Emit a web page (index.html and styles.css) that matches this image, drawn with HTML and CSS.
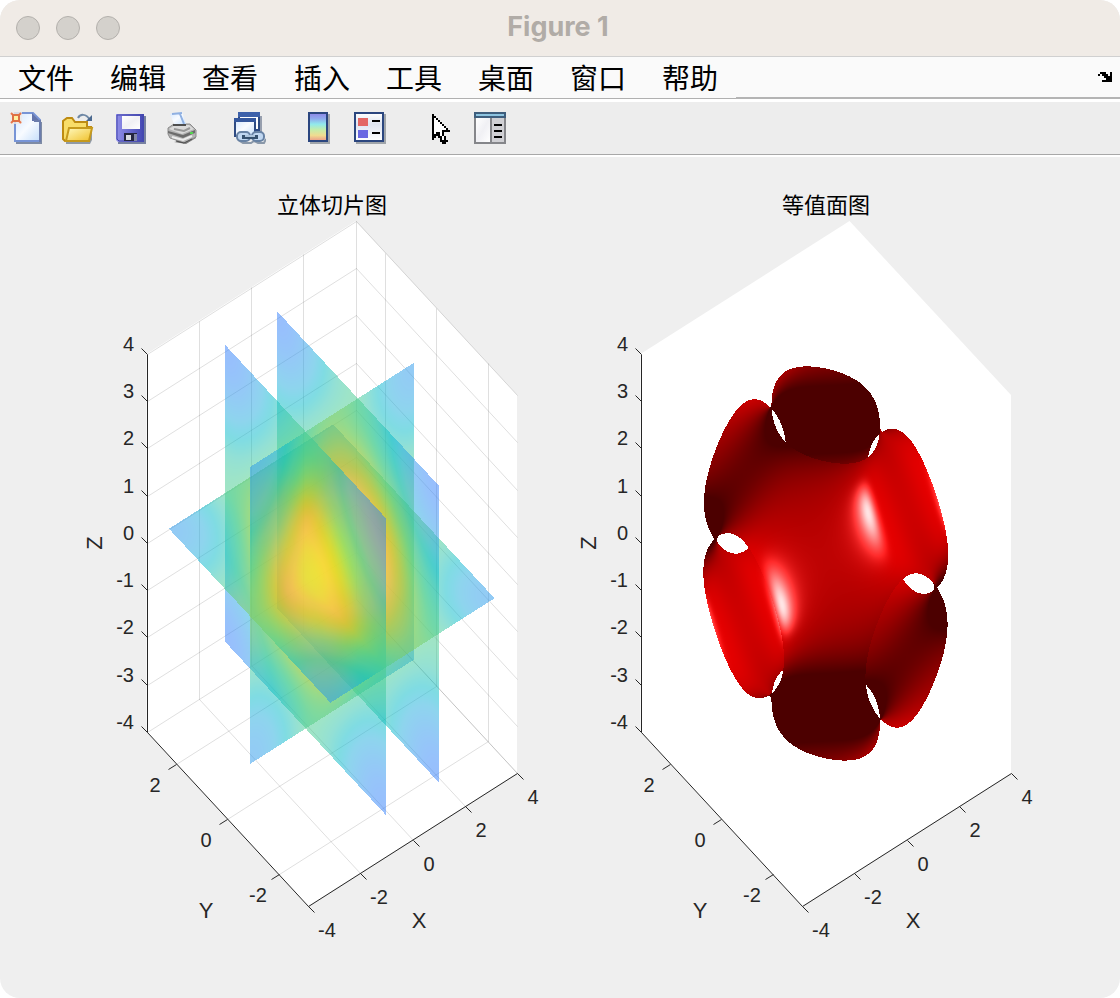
FILE: index.html
```html
<!DOCTYPE html>
<html lang="zh-CN">
<head>
    <meta charset="UTF-8">
    <meta name="viewport" content="width=device-width, initial-scale=1.0">
    <title>Figure 1</title>
    <link rel="stylesheet" href="styles.css">
</head>
<body>
    <div class="window">
        <header class="titlebar">
            <div class="lights">
                <span class="light"></span>
                <span class="light"></span>
                <span class="light"></span>
            </div>
            <h1 class="title">Figure 1</h1>
        </header>

        <nav class="menubar">
            <div class="menus">
                <button>文件</button>
                <button>编辑</button>
                <button>查看</button>
                <button>插入</button>
                <button>工具</button>
                <button>桌面</button>
                <button>窗口</button>
                <button>帮助</button>
            </div>
            <div class="dock">
                <button aria-label="停靠">
                    <svg width="14" height="10" viewBox="0 0 14 10" shape-rendering="crispEdges">
                        <path d="M2 0h6v2h2v2h2V0h2v10H4V8h4V6H6V4H4V2H2v2H0V2h2z"/>
                    </svg>
                </button>
            </div>
        </nav>

        <div class="toolbar">
            <div class="group">
                <button aria-label="新建">
                    <svg viewBox="0 0 32 32">
                        <path d="M6 32h26V10h-2v20H6z" fill="#7e8ba5"/>
                        <path d="M5 1h18l7 7v21H5z" fill="url(#paper)" stroke="#7794d6" stroke-width="2"/>
                        <path d="M22 1v8h8z" fill="#6475ac"/>
                        <path d="M24 9h6v21" fill="none" stroke="#6c7dac" stroke-width="2"/>
                        <path d="M0 0h12v12H0z" fill="#efe9e4" opacity=".8"/>
                        <path d="M1 1l2 2M11 1l-2 2M1 11l2-2M11 11l-2-2" stroke="#e87750" stroke-width="2"/>
                        <rect x="3" y="3" width="6" height="6" fill="#fff0a0" stroke="#df7044" stroke-width="2"/>
                    </svg>
                </button>
                <button aria-label="打开">
                    <svg viewBox="0 0 32 32">
                        <path d="M4 32h24l2-4V14h-2v14H4z" fill="#909aa6"/>
                        <path d="M1 27V9l4-3h5l3 4h12v5h4L27 29H3z" fill="#f8dd69" stroke="#bd8b12" stroke-width="2"/>
                        <path d="M7 16h23l-3 13H4z" fill="url(#gold)" stroke="#c69a1c" stroke-width="2"/>
                        <path d="M16 6c2-4 8-5 12 2" fill="none" stroke="#6f88a5" stroke-width="2"/>
                        <path d="M24 9h6V3z" fill="#4c6a90"/>
                    </svg>
                </button>
                <button aria-label="保存">
                    <svg viewBox="0 0 32 32">
                        <path d="M4 4h28v28H4z" fill="#7781a0"/>
                        <path d="M2 2h28v28H4l-2-2z" fill="url(#disk)"/>
                        <path d="M3 3h26v26H5l-2-2z" fill="none" stroke="#4548ac" stroke-width="1"/>
                        <path d="M8 4h18v13H8z" fill="url(#label)"/>
                        <path d="M10 21h13v8H10z" fill="#24263f"/>
                        <path d="M12 23h5v5h-5z" fill="#d9dbe2"/>
                        <path d="M20 22h3v7h-3z" fill="#8287a8"/>
                    </svg>
                </button>
                <button aria-label="打印">
                    <svg viewBox="0 0 32 32">
                        <path d="M8 30l12 2 10-6v-6l-12 8z" fill="#7c7c7c"/>
                        <path d="M2 16l6-4h16l6 6v7l-12 6-14-5-2-4z" fill="#b4b4b4" stroke="#8c8c8c" stroke-width="1"/>
                        <path d="M3 17l6-4h14l5 4-12 5z" fill="#dadada"/>
                        <path d="M4 2l12-2 4 12H8z" fill="url(#paper)"/>
                        <path d="M6 2l10-1M14 2l4 10" fill="none" stroke="#8fb0e2" stroke-width="2"/>
                        <path d="M7 13h13" stroke="#4e4e4e" stroke-width="2"/>
                        <path d="M8 17l10 2 6-3" fill="none" stroke="#979797" stroke-width="2"/>
                        <path d="M2 19l15 4 12-5v3l-12 5-15-5z" fill="#6c6c6c"/>
                        <path d="M6 25l11 3 9-4" fill="none" stroke="#ececec" stroke-width="2"/>
                        <path d="M10 29l8 2 8-4" fill="none" stroke="#4c4c4c" stroke-width="1"/>
                        <path d="M24 20h3v2h-3z" fill="#55d551"/>
                    </svg>
                </button>
            </div>

            <div class="group">
                <button aria-label="链接绘图">
                    <svg viewBox="0 0 32 32">
                        <path d="M8 4h20v20H8z" fill="#979fae"/>
                        <path d="M5 1h20v17H5z" fill="#fff" stroke="#2e4b83" stroke-width="2"/>
                        <path d="M4 0h22v5H4z" fill="#3d61aa"/>
                        <path d="M1 7h20v17H1z" fill="url(#paper)" stroke="#2e4b83" stroke-width="2"/>
                        <path d="M0 6h22v4H0z" fill="#34579d"/>
                        <path d="M4 28l5 3h8l3-2 4 2h6l2-4" fill="none" stroke="#8a98a9" stroke-width="2"/>
                        <rect x="3" y="20" width="13" height="9" rx="4" fill="#c0d7f1" stroke="#6782a4" stroke-width="2"/>
                        <rect x="18" y="20" width="12" height="9" rx="4" fill="#c0d7f1" stroke="#6782a4" stroke-width="2"/>
                        <path d="M8 25h16" stroke="#36516f" stroke-width="4"/>
                        <path d="M11 24h10" stroke="#adc4dc" stroke-width="2"/>
                    </svg>
                </button>
            </div>

            <div class="group">
                <button aria-label="插入颜色栏">
                    <svg viewBox="0 0 32 32" shape-rendering="crispEdges">
                        <path d="M8 2h20v30H8z" fill="#a0a5aa"/>
                        <path d="M7 1h18v28H7z" fill="url(#bar)" stroke="#2b467f" stroke-width="2"/>
                    </svg>
                </button>
                <button aria-label="插入图例">
                    <svg viewBox="0 0 32 32" shape-rendering="crispEdges">
                        <path d="M2 2h30v30H2z" fill="#a0a5aa"/>
                        <path d="M1 1h28v28H1z" fill="url(#card)" stroke="#2b467f" stroke-width="2"/>
                        <path d="M4 6h10v8H4z" fill="#e36664"/>
                        <path d="M4 18h10v8H4z" fill="#6967e2"/>
                        <path d="M18 8h8v2h-8zM18 20h8v2h-8z"/>
                    </svg>
                </button>
            </div>

            <div class="group">
                <button aria-label="编辑绘图">
                    <svg viewBox="0 0 32 32" shape-rendering="crispEdges">
                        <path d="M10 2h2v2h2v2h2v2h2v2h2v2h2v2h2v2h2v2h2v2h-6v4h2v4h2v2h-2v2h-4v-2h-2v-4h-2v-2h-2v2h-2v2h-2z"/>
                        <path d="M12 6h2v2h2v2h2v2h2v2h2v2h2v2h-4v6h2v4h-2v-4h-2v-4h-4v2h-2z" fill="#fff"/>
                    </svg>
                </button>
                <button aria-label="属性检查器">
                    <svg viewBox="0 0 32 32" shape-rendering="crispEdges">
                        <path d="M0 0h32v32H0z" fill="#85868a"/>
                        <path d="M2 6h14v24H2z" fill="url(#label)"/>
                        <path d="M18 6h12v24H18z" fill="#d0d0d4"/>
                        <path d="M0 0h32v6H0z" fill="#3e5e7d"/>
                        <path d="M2 2h28v2H2z" fill="#8dc4e0"/>
                        <path d="M20 12h8v2h-8zM20 18h8v2h-8zM20 24h8v2h-8z"/>
                    </svg>
                </button>
            </div>
        </div>

        <main class="figure">
            <div class="axes">
                <svg class="frame" id="sliceFrame" viewBox="0 0 494 770"></svg>
                <canvas class="surface" id="slicePlot" width="494" height="770"></canvas>
            </div>
            <div class="axes">
                <svg class="frame" id="isoFrame" viewBox="0 0 494 770"></svg>
                <canvas class="surface" id="isoPlot" width="494" height="770"></canvas>
            </div>
        </main>
    </div>

    <!-- shared gradients for the toolbar icons -->
    <svg class="defs" aria-hidden="true">
        <defs>
            <linearGradient id="paper" x1="0" y1="0" x2="1" y2="1">
                <stop offset="0" stop-color="#d3e6ff"/>
                <stop offset=".5" stop-color="#f8fbff"/>
                <stop offset="1" stop-color="#c5defb"/>
            </linearGradient>
            <linearGradient id="gold" x1="0" y1="0" x2="1" y2="1">
                <stop offset="0" stop-color="#fffac0"/>
                <stop offset="1" stop-color="#f0c029"/>
            </linearGradient>
            <linearGradient id="disk" x1="0" y1="0" x2="1" y2="0">
                <stop offset="0" stop-color="#918fea"/>
                <stop offset="1" stop-color="#4145b2"/>
            </linearGradient>
            <linearGradient id="label" x1="1" y1="1" x2="0" y2="0">
                <stop offset="0" stop-color="#fff"/>
                <stop offset=".5" stop-color="#f0f0f4"/>
                <stop offset="1" stop-color="#fff"/>
            </linearGradient>
            <linearGradient id="card" x1="0" y1="0" x2="0" y2="1">
                <stop offset="0" stop-color="#fff"/>
                <stop offset=".4" stop-color="#dfe5f1"/>
                <stop offset="1" stop-color="#fff"/>
            </linearGradient>
            <linearGradient id="bar" x1="0" y1="0" x2="0" y2="1">
                <stop offset="0" stop-color="#8e84e5"/>
                <stop offset=".2" stop-color="#8fa9ed"/>
                <stop offset=".4" stop-color="#91e9ec"/>
                <stop offset=".6" stop-color="#c5edaa"/>
                <stop offset=".8" stop-color="#f0dc90"/>
                <stop offset="1" stop-color="#ec9788"/>
            </linearGradient>
        </defs>
    </svg>

    <script src="script.js"></script>
</body>
</html>
```
FILE: styles.css
```css
body {
    margin: 0;
    background-color: #fff;
    font-family: "Liberation Sans", "Noto Sans CJK SC", sans-serif;
}

.window {
    display: flex;
    flex-direction: column;
    min-height: 100vh;
    border-radius: 20px;
    overflow: hidden;
    background-color: #efefef;
}

button {
    margin: 0;
    padding: 0;
    border: none;
    background: none;
    color: #000;
    font: inherit;
}

/* title bar */
.titlebar {
    display: grid;
    grid-template-columns: 1fr auto 1fr;
    align-items: center;
    height: 56px;
    box-sizing: border-box;
    padding: 0 16px;
    background-color: #f0ebe6;
}

.lights {
    display: flex;
    gap: 16px;
}

.light {
    width: 24px;
    height: 24px;
    box-sizing: border-box;
    border: 1px solid #b3b0ac;
    border-radius: 50%;
    background-color: #d4d1cc;
}

.title {
    margin: 0;
    padding: 0 4px 2px 0;
    font: bold 27px/32px Inter, sans-serif;
    color: #b1aca7;
}

/* menus */
.menubar {
    display: flex;
    height: 42px;
    background-color: #fafafa;
    border-top: 1px solid #d0d0d0;
}

.menus {
    display: flex;
    align-items: flex-start;
    gap: 36px;
    padding: 0 18px;
    border-bottom: 1px solid #b0b0b0;
    font: 28px/40px "Noto Sans CJK SC", sans-serif;
}

.dock {
    display: flex;
    flex: 1;
    align-items: center;
    justify-content: flex-end;
    padding-right: 8px;
    border-bottom: 2px solid #b4b4b4;
}

.dock svg {
    display: block;
}

/* toolbar */
.toolbar {
    display: flex;
    gap: 36px;
    padding: 10px;
    background-color: #ededed;
    border-top: 3px solid #fff;
    border-bottom: 1px solid #a8a8a8;
    box-shadow: 0 2px #fff;
}

.group {
    display: flex;
    gap: 20px;
}

.group svg {
    display: block;
    width: 32px;
    height: 32px;
}

/* plots */
.figure {
    display: flex;
    flex: 1;
    justify-content: center;
    padding: 25px 0;
}

.axes {
    display: grid;
    width: 494px;
}

.frame,
.surface {
    grid-area: 1 / 1;
    width: 100%;
    height: auto;
}

.wall {
    fill: #fff;
}

.grid-line {
    stroke: #262626;
    stroke-opacity: 0.15;
}

.axis-line {
    fill: none;
    stroke: #262626;
}

.tick-label,
.axis-label {
    fill: #262626;
    font-size: 20px;
    text-anchor: middle;
}

.axis-label {
    font-size: 22px;
}

.tick-label.end {
    text-anchor: end;
}

.plot-title {
    fill: #000;
    font: 22px "Noto Sans CJK SC", sans-serif;
    text-anchor: middle;
}

.defs {
    display: block;
    width: 0;
    height: 0;
}
```
FILE: script.js
```javascript
const PI = Math.PI;
const WIDTH = 494;
const HEIGHT = 770;

// screen size of one data unit along each axis
const AX = [26.125, -16.625];
const AY = [-25.7, -27.7];
const AZ = -47.25;
const ORIGIN = [242, 726];

// direction from the viewer into the box, in data units
const RAY = [1, 1.0165, -0.9478];

function project(x, y, z) {
    return [
        ORIGIN[0] + AX[0] * (x + 4) + AY[0] * (y + PI),
        ORIGIN[1] + AX[1] * (x + 4) + AY[1] * (y + PI) + AZ * (z + 4)
    ];
}

const CENTER = project(0, 0, 0);

function field(x, y, z) {
    return Math.cos(x) + Math.cos(y) + Math.cos(z);
}

// ---------- axes, grid and labels ----------

function line(cls, a, b) {
    const snap = c => Math.round(c) + 0.5;
    return `<path class="${cls}" d="M${a.map(snap)}L${b.map(snap)}"/>`;
}

function text(cls, x, y, value, extra = '') {
    return `<text class="${cls}" x="${x}" y="${y}" ${extra}>${value}</text>`;
}

function drawFrame(id, title, withGrid) {
    const wall = [
        project(-4, PI, -4), project(-4, PI, 4), project(4, PI, 4),
        project(4, -PI, 4), project(4, -PI, -4), project(-4, -PI, -4)
    ];
    let out = `<polygon class="wall" points="${wall.join(' ')}"/>`;

    if (withGrid) {
        for (let x = -2; x <= 4; x += 2) {
            out += line('grid-line', project(x, PI, -4), project(x, PI, 4));
            out += line('grid-line', project(x, -PI, -4), project(x, PI, -4));
        }
        for (let y = -2; y <= 2; y += 2) {
            out += line('grid-line', project(4, y, -4), project(4, y, 4));
            out += line('grid-line', project(-4, y, -4), project(4, y, -4));
        }
        for (let z = -4; z <= 4; z++) {
            out += line('grid-line', project(-4, PI, z), project(4, PI, z));
            out += line('grid-line', project(4, PI, z), project(4, -PI, z));
        }
    }

    out += line('axis-line', project(-4, PI, 4), project(-4, PI, -4));
    out += line('axis-line', project(-4, PI, -4), project(-4, -PI, -4));
    out += line('axis-line', project(-4, -PI, -4), project(4, -PI, -4));

    for (let z = -4; z <= 4; z++) {
        const p = project(-4, PI, z);
        out += line('axis-line', p, [p[0] - 6, p[1] - 6]);
        out += text('tick-label end', 68, Math.round(p[1]) - 3, z);
    }
    for (let x = -4; x <= 4; x += 2) {
        const p = project(x, -PI, -4).map(Math.round);
        out += line('axis-line', p, [p[0] + 6, p[1] + 6]);
        out += text('tick-label', p[0] + (x < 0 ? 19 : 16), p[1] + 31, x);
    }
    for (let y = -2; y <= 2; y += 2) {
        const p = project(-4, y, -4).map(Math.round);
        out += line('axis-line', p, [p[0] - 8, p[1] + 5]);
        out += text('tick-label', p[0] - 21, p[1] + 28, y);
    }

    out += text('axis-label', 353, 748, 'X');
    out += text('axis-label', 140, 738, 'Y');
    out += text('axis-label', 0, 0, 'Z', 'transform="translate(36 363) rotate(-90)"');
    out += text('plot-title', 266, 33, title);
    document.getElementById(id).innerHTML = out;
}

// ---------- slices ----------

const PARULA = [
    [62, 38, 168], [65, 46, 187], [68, 55, 205], [70, 66, 222],
    [71, 77, 235], [71, 88, 245], [70, 98, 250], [62, 111, 254],
    [50, 124, 252], [46, 135, 247], [43, 145, 240], [38, 154, 233],
    [34, 163, 227], [29, 171, 220], [11, 179, 211], [1, 185, 199],
    [18, 190, 185], [40, 194, 171], [52, 199, 156], [67, 203, 138],
    [92, 204, 118], [118, 205, 97], [148, 202, 74], [176, 198, 55],
    [200, 193, 41], [222, 189, 42], [241, 186, 55], [254, 190, 60],
    [253, 202, 51], [249, 214, 45], [245, 227, 39], [246, 239, 32],
    [249, 251, 21]
];

function colormap(value) {
    const t = (value + 3) / 6 * (PARULA.length - 1);
    const i = Math.min(Math.floor(t), PARULA.length - 2);
    return PARULA[i].map((c, k) => c + (PARULA[i + 1][k] - c) * (t - i));
}

// normal axis and offset of each cutting plane
const PLANES = [[0, -1], [0, 1], [1, 0], [2, 0]];

// a point on the ray of one pixel: here x = 0
function rayStart(px, py) {
    const dx = px - CENTER[0];
    const dy = py - CENTER[1];
    const y = dx / AY[0];
    return [0, y, (dy - AY[1] * y) / AZ];
}

function drawSlices() {
    const ctx = document.getElementById('slicePlot').getContext('2d');
    const image = ctx.createImageData(WIDTH, HEIGHT);

    for (let py = 0; py < HEIGHT; py++) {
        for (let px = 0; px < WIDTH; px++) {
            const start = rayStart(px + 0.5, py + 0.5);
            const hits = [];
            for (const [axis, offset] of PLANES) {
                const t = (offset - start[axis]) / RAY[axis];
                const p = start.map((c, k) => c + RAY[k] * t);
                if (p.every(c => Math.abs(c) <= PI)) {
                    hits.push({ t, color: colormap(field(...p)) });
                }
            }
            if (!hits.length) continue;

            // blend from the farthest plane to the nearest
            hits.sort((a, b) => b.t - a.t);
            let sum = [0, 0, 0];
            let alpha = 0;
            for (const hit of hits) {
                sum = sum.map((c, k) => c * 0.5 + hit.color[k] * 0.5);
                alpha = alpha * 0.5 + 0.5;
            }
            const i = (py * WIDTH + px) * 4;
            for (let k = 0; k < 3; k++) image.data[i + k] = sum[k] / alpha;
            image.data[i + 3] = alpha * 255;
        }
    }
    ctx.putImageData(image, 0, 0);
}

// ---------- isosurface ----------

function normalize(v) {
    const len = Math.hypot(...v);
    return v.map(c => c / len);
}

function dot(a, b) {
    return a[0] * b[0] + a[1] * b[1] + a[2] * b[2];
}

const VIEW = normalize([-0.527, -0.687, 0.5]);
const LIGHT = normalize([0.1, -0.58, 0.81]);

function shade(p) {
    // the y axis is shorter in data units, so its normals shrink
    let n = normalize([Math.sin(p[0]), Math.sin(p[1]) * PI / 4, Math.sin(p[2])]);
    if (dot(n, VIEW) < 0) n = n.map(c => -c);
    const d = dot(n, LIGHT);
    const diffuse = Math.max(0, d);
    const reflected = n.map((c, k) => 2 * d * c - LIGHT[k]);
    const specular = d > 0 ? 0.9 * Math.pow(Math.max(0, dot(reflected, VIEW)), 10) : 0;
    return [0.3 + 0.6 * diffuse + specular, specular, specular].map(c => Math.min(255, c * 255));
}

function drawIsosurface() {
    const ctx = document.getElementById('isoPlot').getContext('2d');
    const image = ctx.createImageData(WIDTH, HEIGHT);
    const steps = 90;

    for (let py = 0; py < HEIGHT; py++) {
        for (let px = 0; px < WIDTH; px++) {
            const s = rayStart(px + 0.5, py + 0.5);

            // part of the ray inside the data box
            let near = -Infinity;
            let far = Infinity;
            for (let k = 0; k < 3; k++) {
                const a = (-PI - s[k]) / RAY[k];
                const b = (PI - s[k]) / RAY[k];
                near = Math.max(near, Math.min(a, b));
                far = Math.min(far, Math.max(a, b));
            }
            if (near >= far) continue;

            const at = t => field(s[0] + RAY[0] * t, s[1] + RAY[1] * t, s[2] + RAY[2] * t);
            const step = (far - near) / steps;
            let prev = at(near);
            for (let j = 1; j <= steps; j++) {
                const value = at(near + j * step);
                if (prev * value < 0) {
                    let lo = near + (j - 1) * step;
                    let hi = lo + step;
                    for (let n = 0; n < 10; n++) {
                        const mid = (lo + hi) / 2;
                        if (at(mid) * prev > 0) lo = mid;
                        else hi = mid;
                    }
                    const color = shade(s.map((c, k) => c + RAY[k] * lo));
                    const i = (py * WIDTH + px) * 4;
                    for (let k = 0; k < 3; k++) image.data[i + k] = color[k];
                    image.data[i + 3] = 255;
                    break;
                }
                prev = value;
            }
        }
    }
    ctx.putImageData(image, 0, 0);
}

drawFrame('sliceFrame', '立体切片图', true);
drawFrame('isoFrame', '等值面图', false);
drawSlices();
drawIsosurface();
```
